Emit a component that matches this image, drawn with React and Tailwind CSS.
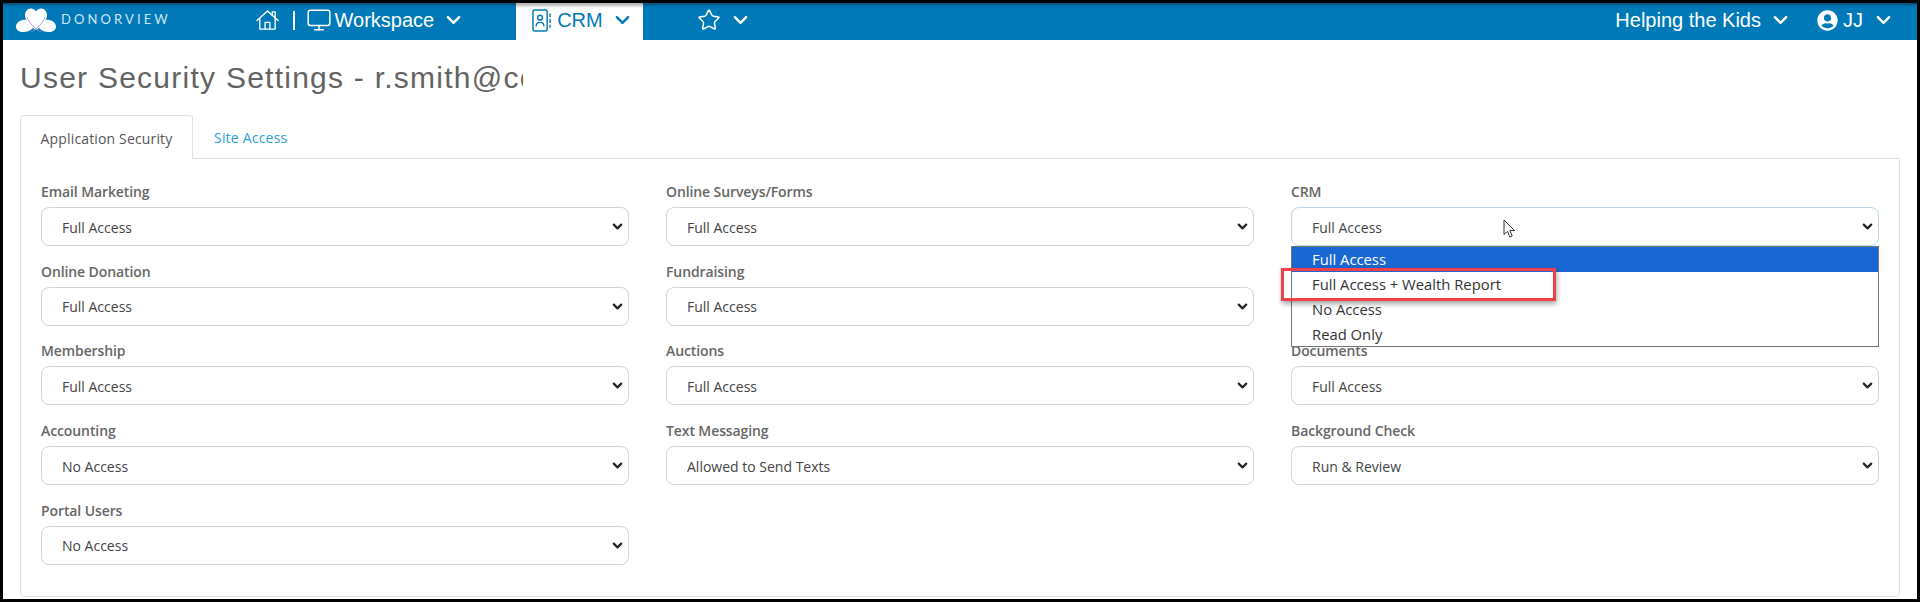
import React from "react";
import { ChevronDown, Monitor, Star } from "lucide-react";
import { FaUserCircle } from "react-icons/fa";

const Chev = ({ className = "" }) => (
  <svg viewBox="0 0 16 10" className={`w-[15px] h-[10px] ${className}`} fill="none" stroke="currentColor" strokeWidth="2.6" strokeLinecap="round" strokeLinejoin="round">
    <path d="M2 2l6 6 6-6" />
  </svg>
);

const House = () => (
  <svg viewBox="0 0 24 22" className="w-[23px] h-[22px]" fill="none" stroke="currentColor" strokeWidth="1.4" strokeLinejoin="round" strokeLinecap="round">
    <path d="M1 11.5 12 1.5l11 10" />
    <path d="M4 9.5V20.5h16V9.5" />
    <path d="M9.5 20.5v-7h5v7" />
    <path d="M17 6V2.5h3V9" />
  </svg>
);

const AddressBook = () => (
  <svg viewBox="0 0 20 24" className="w-[19px] h-[23px]" fill="none" stroke="currentColor" strokeWidth="1.5" strokeLinecap="round" strokeLinejoin="round">
    <rect x="1" y="1" width="15" height="22" rx="2" />
    <circle cx="8.5" cy="9" r="2.5" />
    <path d="M4.5 17.5c0-2.5 1.5-3.5 4-3.5s4 1 4 3.5" />
    <path d="M19 5v3M19 11v3M19 17v2" />
  </svg>
);

const Logo = () => (
  <svg viewBox="0 0 42 25" className="w-[42px] h-[25px]">
    <path d="M21 22C15 18 10 13 10 7c0-4 3-7 6.500-6.500C18.500.8 20.300 2 21 3.500 21.700 2 23.500.8 25.500.500 29 0 32 3 32 7c0 6-5 11-11 15z" fill="#fff" />
    <path d="M14 13c-2-1-4-1.500-6-1-4 .6-7 3.500-7 6.500C1 22 4 24 8 24c4 0 7-1 10-4z" fill="#fff" />
    <path d="M28 13c2-1 4-1.500 6-1 4 .6 7 3.500 7 6.500 0 3.500-3 5.500-7 5.500-4 0-7-1-10-4z" fill="#fff" />
    <path d="M12 9c2 6 7 11 14 15M30 9c-2 6-7 11-14 15" fill="none" stroke="#9a96c8" strokeWidth="0.9" />
  </svg>
);

const Cursor = () => (
  <svg viewBox="0 0 13 20" className="absolute left-[212px] top-[12px] w-[13px] h-[20px]" fill="#fff" stroke="#333" strokeWidth="1">
    <path d="M1 1v14.500l3.500-3.200 2.300 5.700 2.400-1-2.300-5.500H11.500z" />
  </svg>
);

function Select({ value, focused = false, children }) {
  return (
    <div className="relative h-[39px]">
      <select
        defaultValue={value}
        className={`block w-full h-full appearance-none bg-white rounded-[8px] border pl-[20px] pr-8 pt-[1px] text-[14px] text-[#444] font-['Open_Sans',sans-serif] outline-none ${focused ? "border-[#bcd6e6]" : "border-[#ced4da]"}`}
      >
        <option>{value}</option>
      </select>
      <ChevronDown size={15} strokeWidth={3.4} className="absolute right-[4px] top-[12px] text-[#222] pointer-events-none" />
      {children}
    </div>
  );
}

function Field({ label, value, focused, children }) {
  return (
    <div>
      <label className="block h-[20px] mb-[5px] text-[14px] leading-[20px] font-semibold tracking-[-0.1px] text-[#666] font-['Open_Sans',sans-serif]">{label}</label>
      <Select value={value} focused={focused}>{children}</Select>
    </div>
  );
}

const options = ["Full Access", "Full Access + Wealth Report", "No Access", "Read Only"];

export default function App() {
  return (
    <div className="h-[602px] w-full bg-white border-[3px] border-black font-['Liberation_Sans',sans-serif] overflow-hidden">
      <header className="relative h-[37px] pb-[3px] bg-[#0079b8] text-white flex items-center text-[20px] shadow-[inset_0_4px_3px_-2px_rgba(0,0,0,0.35)]">
        <div className="flex items-center ml-[12px] w-[241px]">
          <Logo />
          <span className="ml-[4px] text-[13px] tracking-[3.1px] text-[#cfe6f2] font-['Lato',sans-serif]">DONORVIEW</span>
        </div>
        <House />
        <span className="ml-[14px] w-[1.500px] h-[19px] bg-white" />
        <Monitor size={26} strokeWidth={1.4} className="ml-[11px]" />
        <span className="ml-[3px]">Workspace</span>
        <Chev className="ml-[12px]" />
        <div className="ml-[55px] -mb-[3px] h-[37px] w-[127px] bg-white text-[#0079b8] flex items-center pl-[16px] pb-[3px] shadow-[inset_0_5px_3px_-2px_rgba(0,0,0,0.3)]">
          <AddressBook />
          <span className="ml-[6px]">CRM</span>
          <Chev className="ml-[12px]" />
        </div>
        <Star size={24} strokeWidth={1.5} className="ml-[54px]" />
        <Chev className="ml-[12px]" />
        <div className="ml-auto mr-[26px] flex items-center">
          <span>Helping the Kids</span>
          <Chev className="ml-[12px]" />
          <FaUserCircle size={21} className="ml-[29px]" />
          <span className="ml-[5px]">JJ</span>
          <Chev className="ml-[13px]" />
        </div>
      </header>

      <main className="pl-[17px] pr-[17px]">
        <h1 className="w-[503px] overflow-hidden whitespace-nowrap h-[75px] pt-[16px] text-[30px] leading-[44px] tracking-[1.25px] text-[#636363]">
          User Security Settings - r.smith@co
        </h1>
        <nav className="flex h-[44px] text-[14px] font-['Open_Sans',sans-serif] relative z-10">
          <div className="w-[173px] h-[44px] pt-[2px] flex items-center justify-center bg-white border border-b-0 border-[#dee2e6] rounded-t-[4px] text-[#555] tracking-[0.15px]">Application Security</div>
          <div className="ml-[21px] h-[43px] pt-[2px] flex items-center text-[#2d9fdb] tracking-[0.2px]">Site Access</div>
        </nav>
        <section className="-mt-[1px] h-[439px] border border-[#dee2e6] rounded-b-[4px] pt-[23px] px-[20px]">
          <div className="grid grid-cols-3 gap-x-[37px] gap-y-[15.7px]">
            <Field label="Email Marketing" value="Full Access" />
            <Field label="Online Surveys/Forms" value="Full Access" />
            <Field label="CRM" value="Full Access" focused>
              <Cursor />
              <ul className="absolute z-20 left-0 right-0 top-[39px] h-[101px] bg-white border border-[#767676] text-[14.8px] text-[#333] font-['Open_Sans',sans-serif]">
                {options.map((o, i) => (
                  <li key={o} className={`h-[25px] leading-[25px] pl-[20px] ${i === 0 ? "bg-[#1967d2] text-white" : ""}`}>{o}</li>
                ))}
              </ul>
              <div className="absolute z-30 left-[-10px] top-[61px] w-[275px] h-[33px] border-[3px] border-[#f04048] shadow-[1px_3px_5px_rgba(0,0,0,0.35)]" />
            </Field>
            <Field label="Online Donation" value="Full Access" />
            <Field label="Fundraising" value="Full Access" />
            <div />
            <Field label="Membership" value="Full Access" />
            <Field label="Auctions" value="Full Access" />
            <Field label="Documents" value="Full Access" />
            <Field label="Accounting" value="No Access" />
            <Field label="Text Messaging" value="Allowed to Send Texts" />
            <Field label="Background Check" value="Run & Review" />
            <Field label="Portal Users" value="No Access" />
          </div>
        </section>
      </main>
    </div>
  );
}
